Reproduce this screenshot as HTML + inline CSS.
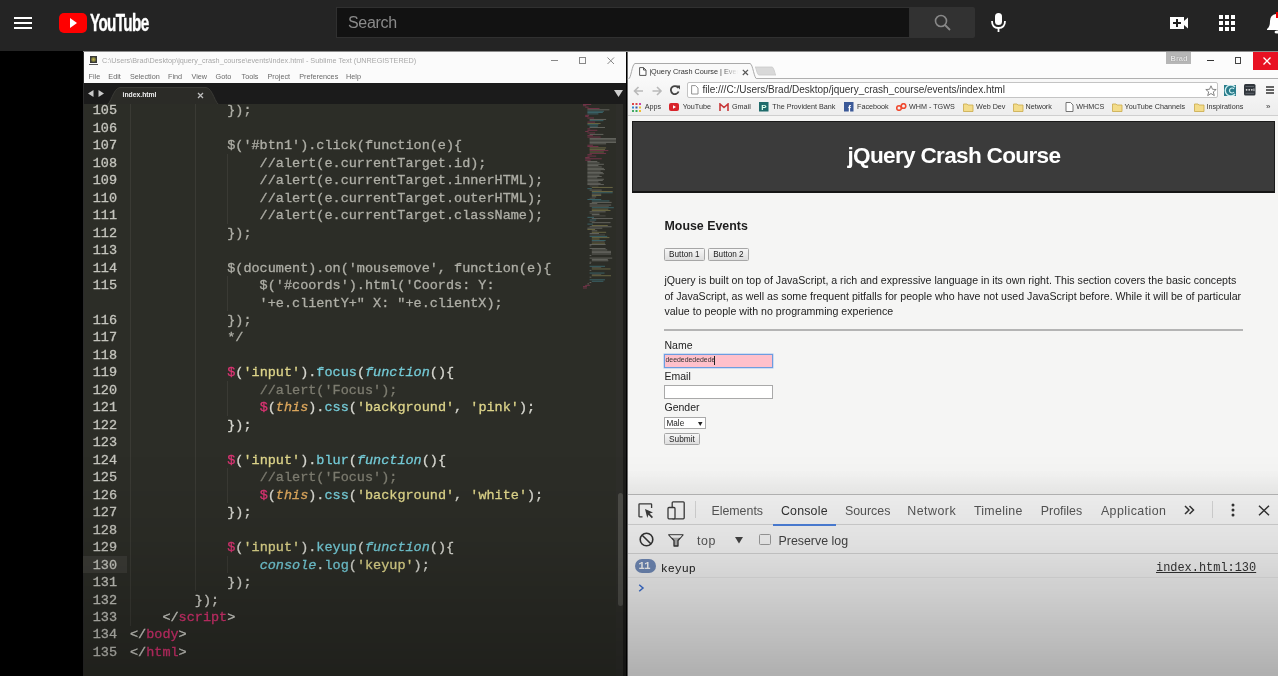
<!DOCTYPE html>
<html><head><meta charset="utf-8">
<style>
*{margin:0;padding:0;box-sizing:border-box}
html,body{width:1278px;height:676px;overflow:hidden;background:#000;font-family:"Liberation Sans",sans-serif}
#yt,#subl,#chrome{will-change:transform}
.a{position:absolute}
#yt{left:0;top:0;width:1278px;height:51px;background:#242424}
#subl{left:83px;top:52px;width:543px;height:624px;background:#2c2d27;overflow:hidden}
#chrome{left:627px;top:52px;width:651px;height:624px;background:#f2f2f2;overflow:hidden}
.code{font-family:"Liberation Mono",monospace;font-size:13.5px;line-height:17.47px;white-space:pre;color:#d6d6cf;-webkit-text-stroke:0.3px currentColor}
.ln{font-family:"Liberation Mono",monospace;font-size:13.5px;line-height:17.47px;white-space:pre;color:#c4c4bd;text-align:right;-webkit-text-stroke:0.3px currentColor}
.cm{color:#aeaea6}
.lc{color:#7d7c70}
.k{color:#dd3474}
.s{color:#ddd48a}
.f{color:#74cad6}
.i{font-style:italic}
.bk{top:50px;font-size:7.2px;color:#333;white-space:nowrap}
.btn{height:12.5px;background:linear-gradient(#f6f6f6,#dedede);border:1px solid #a6a6a6;border-radius:1.5px;font-size:8.2px;line-height:11.5px;text-align:center;color:#222}
.lbl{font-size:10.5px;color:#222}
.dt{font-size:12.4px;white-space:nowrap}
.mn{top:19.6px;font-size:7.25px;color:#6a6a6a;white-space:nowrap}
.o{color:#dba65c}
</style></head><body>
<!-- YouTube masthead -->
<div id="yt" class="a">
  <div class="a" style="left:14px;top:17px;width:18px;height:2px;background:#fff"></div>
  <div class="a" style="left:14px;top:22px;width:18px;height:2px;background:#fff"></div>
  <div class="a" style="left:14px;top:27px;width:18px;height:2px;background:#fff"></div>
  <div class="a" style="left:59px;top:13px;width:28px;height:20px;background:#f00;border-radius:5px"></div>
  <svg class="a" style="left:70px;top:18px" width="8" height="10"><path d="M0 0 L7 5 L0 10Z" fill="#fff"/></svg>
  <div class="a" style="left:90px;top:9px;font-weight:bold;font-size:24px;color:#fff;letter-spacing:-1px;transform:scaleX(0.635);-webkit-text-stroke:0.4px #fff;transform-origin:0 0;white-space:nowrap">YouTube</div>
  <div class="a" style="left:336px;top:7px;width:574px;height:31px;background:#121212;border:1px solid #303030"></div>
  <div class="a" style="left:348px;top:14px;font-size:16px;color:#8a8a8a;letter-spacing:-0.3px">Search</div>
  <div class="a" style="left:910px;top:7px;width:65px;height:31px;background:#323232;border-radius:0 2px 2px 0"></div>
  <svg class="a" style="left:930px;top:12px" width="24" height="22"><circle cx="11" cy="9" r="5.5" stroke="#888" stroke-width="1.6" fill="none"/><line x1="15" y1="13" x2="20" y2="18" stroke="#888" stroke-width="1.8"/></svg>
  <svg class="a" style="left:990px;top:12px" width="18" height="22"><rect x="5" y="1" width="7" height="12" rx="3.5" fill="#fff"/><path d="M2 9 Q2 16 8.5 16 Q15 16 15 9" stroke="#fff" stroke-width="1.8" fill="none"/><line x1="8.5" y1="16" x2="8.5" y2="20" stroke="#fff" stroke-width="1.8"/></svg>
  <svg class="a" style="left:1169px;top:16px" width="20" height="14"><rect x="1" y="1" width="14" height="12" fill="#fff"/><path d="M15 5 L19 1.5 L19 12.5 L15 9Z" fill="#fff"/><rect x="4" y="6" width="8" height="2" fill="#212121"/><rect x="7" y="3" width="2" height="8" fill="#212121"/></svg>
  <svg class="a" style="left:1219px;top:15px" width="17" height="17"><g fill="#fff"><rect x="0" y="0" width="4" height="4"/><rect x="6" y="0" width="4" height="4"/><rect x="12" y="0" width="4" height="4"/><rect x="0" y="6" width="4" height="4"/><rect x="6" y="6" width="4" height="4"/><rect x="12" y="6" width="4" height="4"/><rect x="0" y="12" width="4" height="4"/><rect x="6" y="12" width="4" height="4"/><rect x="12" y="12" width="4" height="4"/></g></svg>
  <svg class="a" style="left:1266px;top:12px" width="12" height="22"><path d="M1 17 Q4 15 4 9 Q4 3 10 2 L12 2 L12 18 L1 18Z" fill="#fff"/><ellipse cx="11" cy="20" rx="2.5" ry="1.5" fill="#fff"/><rect x="10" y="0" width="2" height="6" fill="#e00"/></svg>
</div>

<!-- Sublime window -->
<div id="subl" class="a">
  <div class="a" style="left:0;top:0;width:1px;height:625px;background:#2a2a2a"></div>
  <div class="a" style="left:0;top:49.5px;width:44px;height:17.47px;background:transparent"></div>
  <div class="a" style="left:0;top:503.5px;width:44px;height:17.5px;background:#3b3b36"></div>
  <div class="a ln" style="left:0;top:50.4px;width:34px">105
106
107
108
109
110
111
112
113
114
115

116
117
118
119
120
121
122
123
124
125
126
127
128
129
130
131
132
133
134
135</div>
  <div class="a" style="left:47.3px;top:49.60px;width:1px;height:524.10px;background:#3a3a34"></div>
  <div class="a" style="left:111.8px;top:49.60px;width:1px;height:489.16px;background:#3a3a34"></div>
  <div class="a" style="left:144.3px;top:102.01px;width:1px;height:69.88px;background:#3a3a34"></div>
  <div class="a" style="left:144.3px;top:224.30px;width:1px;height:34.94px;background:#3a3a34"></div>
  <div class="a" style="left:144.3px;top:329.12px;width:1px;height:34.94px;background:#3a3a34"></div>
  <div class="a" style="left:144.3px;top:416.47px;width:1px;height:34.94px;background:#3a3a34"></div>
  <div class="a" style="left:144.3px;top:503.82px;width:1px;height:17.47px;background:#3a3a34"></div>
  <div class="a code" style="left:47px;top:50.4px"><span class=cm>            });</span>

<span class=cm>            $('#btn1').click(function(e){</span>
<span class=cm>                //alert(e.currentTarget.id);</span>
<span class=cm>                //alert(e.currentTarget.innerHTML);</span>
<span class=cm>                //alert(e.currentTarget.outerHTML);</span>
<span class=cm>                //alert(e.currentTarget.className);</span>
<span class=cm>            });</span>

<span class=cm>            $(document).on('mousemove', function(e){</span>
<span class=cm>                $('#coords').html('Coords: Y:</span>
<span class=cm>                '+e.clientY+" X: "+e.clientX);</span>
<span class=cm>            });</span>
<span class=cm>            */</span>

            <span class=k>$</span>(<span class=s>'input'</span>).<span class=f>focus</span>(<span class='f i'>function</span>(){
                <span class=lc>//alert('Focus');</span>
                <span class=k>$</span>(<span class='o i'>this</span>).<span class=f>css</span>(<span class=s>'background'</span>, <span class=s>'pink'</span>);
            });

            <span class=k>$</span>(<span class=s>'input'</span>).<span class=f>blur</span>(<span class='f i'>function</span>(){
                <span class=lc>//alert('Focus');</span>
                <span class=k>$</span>(<span class='o i'>this</span>).<span class=f>css</span>(<span class=s>'background'</span>, <span class=s>'white'</span>);
            });

            <span class=k>$</span>(<span class=s>'input'</span>).<span class=f>keyup</span>(<span class='f i'>function</span>(){
                <span class='f i'>console</span>.<span class=f>log</span>(<span class=s>'keyup'</span>);
            });
        });
    &lt;/<span class=k>script</span>&gt;
&lt;/<span class=k>body</span>&gt;
&lt;/<span class=k>html</span>&gt;</div>
  <!-- title bar -->
  <div class="a" style="left:1px;top:0;width:542px;height:31px;background:#fbfbfb">
    <div class="a" style="left:5.6px;top:3.5px;width:7.5px;height:7.5px;background:radial-gradient(circle,#c8b050 0,#8a8a40 45%,#333 90%);border:1px solid #3a3a3a"></div>
    <div class="a" style="left:5.2px;top:12px;width:8.8px;height:1.2px;background:#555"></div>
    <div class="a" style="left:18px;top:3.5px;font-size:7.25px;color:#a8a8a8;white-space:nowrap">C:\Users\Brad\Desktop\jquery_crash_course\events\index.html - Sublime Text (UNREGISTERED)</div>
    <div class="a mn" style="left:4.5px">File</div><div class="a mn" style="left:24.3px">Edit</div><div class="a mn" style="left:45.9px">Selection</div><div class="a mn" style="left:84.0px">Find</div><div class="a mn" style="left:107.5px">View</div><div class="a mn" style="left:131.5px">Goto</div><div class="a mn" style="left:157.5px">Tools</div><div class="a mn" style="left:183.5px">Project</div><div class="a mn" style="left:215.2px">Preferences</div><div class="a mn" style="left:262.1px">Help</div>
    <div class="a" style="left:467px;top:8px;width:7px;height:1px;background:#888"></div>
    <div class="a" style="left:495px;top:5px;width:7px;height:7px;border:1px solid #888"></div>
    <svg class="a" style="left:523px;top:5px" width="8" height="8"><path d="M0.5 0.5 L7 7 M7 0.5 L0.5 7" stroke="#888" stroke-width="1"/></svg>
  </div>
  <!-- tab bar -->
  <div class="a" style="left:1px;top:31px;width:542px;height:21px;background:#1b1b1b;overflow:hidden">
    <svg class="a" style="left:4px;top:7px" width="20" height="8"><path d="M0 3.5 L5.5 0 L5.5 7Z M10.5 0 L16 3.5 L10.5 7Z" fill="#c9c9c9"/></svg>
    <svg class="a" style="left:18.5px;top:1px" width="130" height="21"><path d="M3 21 C8 21 10 4 17 3.5 L103 3.5 C110 4 112 21 117 21Z" fill="#2b2b27" stroke="#3a3a36" stroke-width="1"/></svg>
    <div class="a" style="left:38.5px;top:8.3px;font-size:6.8px;font-weight:bold;color:#f0f0f0">index.html</div>
    <svg class="a" style="left:113px;top:9px" width="7" height="7"><path d="M1 1 L6 6 M6 1 L1 6" stroke="#bdbdbd" stroke-width="1.3"/></svg>
    <svg class="a" style="left:530px;top:7px" width="9" height="8"><path d="M0 0 L9 0 L4.5 7Z" fill="#d0d0d0"/></svg>
  </div>
  <!-- minimap -->
  <svg opacity="0.6" class="a" style="left:500px;top:52px" width="34" height="186"><rect x="0.0" y="0.00" width="8.2" height="0.8" fill="#b83a6a"/><rect x="0.0" y="1.36" width="3.3" height="0.8" fill="#b83a6a"/><rect x="2.2" y="2.72" width="3.3" height="0.8" fill="#b83a6a"/><rect x="4.4" y="4.08" width="12.1" height="0.8" fill="#b83a6a"/><rect x="4.4" y="5.44" width="22.0" height="0.8" fill="#9a9a94"/><rect x="4.4" y="6.80" width="16.5" height="0.8" fill="#4a9aaa"/><rect x="4.4" y="8.16" width="15.4" height="0.8" fill="#4a9aaa"/><rect x="4.4" y="9.52" width="11.0" height="0.8" fill="#4a9aaa"/><rect x="2.2" y="10.88" width="3.9" height="0.8" fill="#b83a6a"/><rect x="2.2" y="12.24" width="3.3" height="0.8" fill="#b83a6a"/><rect x="4.4" y="13.60" width="6.6" height="0.8" fill="#b83a6a"/><rect x="6.6" y="14.96" width="16.5" height="0.8" fill="#9a9a94"/><rect x="6.6" y="16.32" width="13.8" height="0.8" fill="#4a9aaa"/><rect x="4.4" y="17.68" width="7.7" height="0.8" fill="#b83a6a"/><rect x="4.4" y="19.04" width="13.2" height="0.8" fill="#a8a060"/><rect x="4.4" y="20.40" width="11.0" height="0.8" fill="#4a9aaa"/><rect x="6.6" y="21.76" width="8.2" height="0.8" fill="#4a9aaa"/><rect x="6.6" y="23.12" width="15.4" height="0.8" fill="#9a9a94"/><rect x="4.4" y="24.48" width="2.8" height="0.8" fill="#b83a6a"/><rect x="4.4" y="25.84" width="9.9" height="0.8" fill="#b83a6a"/><rect x="2.2" y="27.20" width="3.3" height="0.8" fill="#b83a6a"/><rect x="4.4" y="28.56" width="7.7" height="0.8" fill="#b83a6a"/><rect x="6.6" y="29.92" width="13.8" height="0.8" fill="#9a9a94"/><rect x="4.4" y="31.28" width="5.5" height="0.8" fill="#b83a6a"/><rect x="4.4" y="32.64" width="13.2" height="0.8" fill="#b83a6a"/><rect x="6.6" y="34.00" width="27.5" height="0.8" fill="#9a9a94"/><rect x="6.6" y="35.36" width="28.6" height="0.8" fill="#9a9a94"/><rect x="6.6" y="36.72" width="26.4" height="0.8" fill="#9a9a94"/><rect x="6.6" y="38.08" width="27.5" height="0.8" fill="#9a9a94"/><rect x="6.6" y="39.44" width="16.5" height="0.8" fill="#9a9a94"/><rect x="4.4" y="40.80" width="5.5" height="0.8" fill="#b83a6a"/><rect x="4.4" y="42.16" width="11.0" height="0.8" fill="#b83a6a"/><rect x="6.6" y="43.52" width="16.5" height="0.8" fill="#a8a060"/><rect x="6.6" y="44.88" width="15.4" height="0.8" fill="#a8a060"/><rect x="6.6" y="46.24" width="18.7" height="0.8" fill="#b83a6a"/><rect x="6.6" y="47.60" width="14.3" height="0.8" fill="#a8a060"/><rect x="6.6" y="48.96" width="16.5" height="0.8" fill="#b83a6a"/><rect x="4.4" y="50.32" width="4.4" height="0.8" fill="#b83a6a"/><rect x="4.4" y="51.68" width="8.8" height="0.8" fill="#b83a6a"/><rect x="2.2" y="53.04" width="4.4" height="0.8" fill="#b83a6a"/><rect x="2.2" y="54.40" width="16.5" height="0.8" fill="#b83a6a"/><rect x="2.2" y="55.76" width="5.5" height="0.8" fill="#b83a6a"/><rect x="4.4" y="57.12" width="9.9" height="0.8" fill="#9a9a94"/><rect x="4.4" y="58.48" width="12.1" height="0.8" fill="#9a9a94"/><rect x="4.4" y="59.84" width="16.5" height="0.8" fill="#9a9a94"/><rect x="4.4" y="61.20" width="11.0" height="0.8" fill="#9a9a94"/><rect x="4.4" y="62.56" width="14.3" height="0.8" fill="#9a9a94"/><rect x="4.4" y="63.92" width="16.5" height="0.8" fill="#9a9a94"/><rect x="4.4" y="65.28" width="17.6" height="0.8" fill="#9a9a94"/><rect x="4.4" y="66.64" width="13.2" height="0.8" fill="#9a9a94"/><rect x="4.4" y="68.00" width="15.4" height="0.8" fill="#9a9a94"/><rect x="4.4" y="69.36" width="16.5" height="0.8" fill="#9a9a94"/><rect x="4.4" y="70.72" width="12.1" height="0.8" fill="#9a9a94"/><rect x="4.4" y="72.08" width="14.3" height="0.8" fill="#9a9a94"/><rect x="4.4" y="73.44" width="9.9" height="0.8" fill="#9a9a94"/><rect x="4.4" y="74.80" width="16.5" height="0.8" fill="#9a9a94"/><rect x="4.4" y="76.16" width="15.4" height="0.8" fill="#9a9a94"/><rect x="4.4" y="77.52" width="11.0" height="0.8" fill="#9a9a94"/><rect x="4.4" y="78.88" width="13.2" height="0.8" fill="#9a9a94"/><rect x="4.4" y="80.24" width="16.5" height="0.8" fill="#9a9a94"/><rect x="6.6" y="81.60" width="8.8" height="0.8" fill="#6e6e66"/><rect x="8.8" y="82.96" width="20.9" height="0.8" fill="#a8a060"/><rect x="4.4" y="84.32" width="4.4" height="0.8" fill="#4a9aaa"/><rect x="6.6" y="85.68" width="12.1" height="0.8" fill="#9a9a94"/><rect x="8.8" y="87.04" width="20.9" height="0.8" fill="#a8a060"/><rect x="8.8" y="88.40" width="20.9" height="0.8" fill="#4a9aaa"/><rect x="8.8" y="89.76" width="9.4" height="0.8" fill="#9a9a94"/><rect x="8.8" y="91.12" width="9.4" height="0.8" fill="#a8a060"/><rect x="8.8" y="92.48" width="4.4" height="0.8" fill="#9a9a94"/><rect x="6.6" y="93.84" width="5.5" height="0.8" fill="#6e6e66"/><rect x="4.4" y="95.20" width="13.8" height="0.8" fill="#4a9aaa"/><rect x="8.8" y="96.56" width="17.6" height="0.8" fill="#4a9aaa"/><rect x="8.8" y="97.92" width="19.8" height="0.8" fill="#9a9a94"/><rect x="6.6" y="99.28" width="7.7" height="0.8" fill="#9a9a94"/><rect x="6.6" y="100.64" width="21.5" height="0.8" fill="#9a9a94"/><rect x="6.6" y="102.00" width="19.2" height="0.8" fill="#6e6e66"/><rect x="8.8" y="103.36" width="22.0" height="0.8" fill="#4a9aaa"/><rect x="8.8" y="104.72" width="16.5" height="0.8" fill="#a8a060"/><rect x="8.8" y="106.08" width="18.7" height="0.8" fill="#a8a060"/><rect x="6.6" y="107.44" width="16.0" height="0.8" fill="#9a9a94"/><rect x="6.6" y="108.80" width="9.9" height="0.8" fill="#6e6e66"/><rect x="8.8" y="110.16" width="7.7" height="0.8" fill="#9a9a94"/><rect x="8.8" y="111.52" width="13.8" height="0.8" fill="#6e6e66"/><rect x="4.4" y="112.88" width="6.6" height="0.8" fill="#4a9aaa"/><rect x="8.8" y="114.24" width="20.9" height="0.8" fill="#9a9a94"/><rect x="6.6" y="115.60" width="6.6" height="0.8" fill="#4a9aaa"/><rect x="6.6" y="116.96" width="5.0" height="0.8" fill="#6e6e66"/><rect x="8.8" y="118.32" width="18.7" height="0.8" fill="#9a9a94"/><rect x="4.4" y="119.68" width="5.5" height="0.8" fill="#4a9aaa"/><rect x="8.8" y="121.04" width="16.0" height="0.8" fill="#a8a060"/><rect x="6.6" y="122.40" width="22.0" height="0.8" fill="#9a9a94"/><rect x="4.4" y="123.76" width="14.9" height="0.8" fill="#9a9a94"/><rect x="4.4" y="125.12" width="7.7" height="0.8" fill="#a8a060"/><rect x="8.8" y="126.48" width="5.5" height="0.8" fill="#9a9a94"/><rect x="8.8" y="127.84" width="14.3" height="0.8" fill="#a8a060"/><rect x="6.6" y="129.20" width="9.4" height="0.8" fill="#9a9a94"/><rect x="6.6" y="130.56" width="15.4" height="0.8" fill="#6e6e66"/><rect x="6.6" y="131.92" width="17.6" height="0.8" fill="#4a9aaa"/><rect x="8.8" y="133.28" width="17.6" height="0.8" fill="#a8a060"/><rect x="8.8" y="134.64" width="7.7" height="0.8" fill="#a8a060"/><rect x="8.8" y="136.00" width="13.8" height="0.8" fill="#4a9aaa"/><rect x="8.8" y="137.36" width="12.7" height="0.8" fill="#6e6e66"/><rect x="8.8" y="138.72" width="13.2" height="0.8" fill="#a8a060"/><rect x="6.6" y="140.08" width="16.0" height="0.8" fill="#9a9a94"/><rect x="6.6" y="141.44" width="1.7" height="0.8" fill="#9a9a94"/><rect x="6.6" y="144.16" width="16.0" height="0.8" fill="#9a9a94"/><rect x="8.8" y="145.52" width="15.4" height="0.8" fill="#9a9a94"/><rect x="8.8" y="146.88" width="19.2" height="0.8" fill="#9a9a94"/><rect x="8.8" y="148.24" width="19.2" height="0.8" fill="#9a9a94"/><rect x="8.8" y="149.60" width="19.2" height="0.8" fill="#9a9a94"/><rect x="6.6" y="150.96" width="1.7" height="0.8" fill="#9a9a94"/><rect x="6.6" y="153.68" width="22.6" height="0.8" fill="#9a9a94"/><rect x="8.8" y="155.04" width="16.0" height="0.8" fill="#9a9a94"/><rect x="8.8" y="156.40" width="16.5" height="0.8" fill="#9a9a94"/><rect x="6.6" y="157.76" width="1.7" height="0.8" fill="#9a9a94"/><rect x="6.6" y="159.12" width="1.1" height="0.8" fill="#9a9a94"/><rect x="6.6" y="161.84" width="15.4" height="0.8" fill="#4a9aaa"/><rect x="8.8" y="163.20" width="9.4" height="0.8" fill="#6e6e66"/><rect x="8.8" y="164.56" width="18.7" height="0.8" fill="#a8a060"/><rect x="6.6" y="165.92" width="1.7" height="0.8" fill="#9a9a94"/><rect x="6.6" y="168.64" width="14.9" height="0.8" fill="#4a9aaa"/><rect x="8.8" y="170.00" width="9.4" height="0.8" fill="#6e6e66"/><rect x="8.8" y="171.36" width="19.2" height="0.8" fill="#a8a060"/><rect x="6.6" y="172.72" width="1.7" height="0.8" fill="#9a9a94"/><rect x="6.6" y="175.44" width="15.4" height="0.8" fill="#4a9aaa"/><rect x="8.8" y="176.80" width="11.6" height="0.8" fill="#4a9aaa"/><rect x="6.6" y="178.16" width="1.7" height="0.8" fill="#9a9a94"/><rect x="4.4" y="179.52" width="1.7" height="0.8" fill="#9a9a94"/><rect x="2.2" y="180.88" width="5.0" height="0.8" fill="#b83a6a"/><rect x="0.0" y="182.24" width="3.9" height="0.8" fill="#b83a6a"/><rect x="0.0" y="183.60" width="3.9" height="0.8" fill="#b83a6a"/></svg>
  <div class="a" style="left:532.5px;top:52px;width:8px;height:573px;background:#2e2e2a"></div>
  <div class="a" style="left:540px;top:52px;width:3px;height:573px;background:#1d1d1b"></div>
  <div class="a" style="left:534.8px;top:441.2px;width:5.3px;height:113px;border-radius:2.5px;background:#4c4c47"></div>
</div>

<!-- Chrome window -->
<div id="chrome" class="a">
  <div class="a" style="left:0;top:0;width:1px;height:624px;background:#6a6a6a"></div>
  <!-- frame / tab strip -->
  <div class="a" style="left:1px;top:0;width:650px;height:27px;background:#fcfcfc"></div>
  <svg class="a" style="left:0;top:10px" width="160" height="18"><path d="M0.5 17 L1.5 17 C4 17 5 2 8 1.5 L123 1.5 C126 2 127 17 130 17 L651 17" fill="#f9f9f9" stroke="#a9a9a9" stroke-width="1"/><path d="M128 5 L145 5 C147 5 148 13 149 13 L132 13 C130 13 129 5 128 5Z" fill="#d9d9d9" stroke="#c9c9c9" stroke-width="0.8"/></svg>
  <svg class="a" style="left:12.0px;top:15.3px" width="8" height="9"><path d="M0.6 0.6 L4.5 0.6 L7 3 L7 8.4 L0.6 8.4Z M4.5 0.6 L4.5 3 L7 3" fill="#fff" stroke="#555" stroke-width="1"/></svg>
  <div class="a" style="left:22.5px;top:15.0px;font-size:7.3px;color:#333;white-space:nowrap;width:88px;overflow:hidden;-webkit-mask-image:linear-gradient(to right,#000 80%,transparent)">jQuery Crash Course | Events</div>
  <svg class="a" style="left:114.5px;top:16.5px" width="7" height="7"><path d="M0.8 0.8 L6 6 M6 0.8 L0.8 6" stroke="#555" stroke-width="1.2"/></svg>
  <!-- Brad badge & controls -->
  <div class="a" style="left:539.0px;top:0;width:25px;height:12px;background:#b6b6b6"></div>
  <div class="a" style="left:543.5px;top:1.5px;font-size:7.5px;font-weight:bold;color:#e4e4e4;text-shadow:0 0 1px #777">Brad</div>
  <div class="a" style="left:580.0px;top:8.0px;width:6.5px;height:1.3px;background:#333"></div>
  <div class="a" style="left:607.5px;top:5.2px;width:6.5px;height:6.5px;border:1px solid #444"></div>
  <div class="a" style="left:626.0px;top:0;width:25px;height:17.5px;background:#e81123"></div>
  <svg class="a" style="left:635.5px;top:4.5px" width="8" height="8"><path d="M0.5 0.5 L7.5 7.5 M7.5 0.5 L0.5 7.5" stroke="#fff" stroke-width="1.3"/></svg>
  <!-- toolbar -->
  <div class="a" style="left:1px;top:27px;width:650px;height:37px;background:linear-gradient(#f9f9f9,#ededed)"></div>
  <div class="a" style="left:130px;top:26px;width:521px;height:1px;background:#b0b0b0"></div>
  <svg class="a" style="left:6.0px;top:33.5px" width="11" height="10"><path d="M10 5 L1.5 5 M5.5 1 L1.5 5 L5.5 9" stroke="#b9b9b9" stroke-width="1.6" fill="none"/></svg>
  <svg class="a" style="left:24.5px;top:33.5px" width="11" height="10"><path d="M0.5 5 L9 5 M5 1 L9 5 L5 9" stroke="#b9b9b9" stroke-width="1.6" fill="none"/></svg>
  <svg class="a" style="left:42.5px;top:33.0px" width="11" height="10"><path d="M8.3 3 A4 4 0 1 0 8.6 6.5" stroke="#444" stroke-width="1.8" fill="none"/><path d="M6 0.5 L10 0.5 L10 4.5Z" fill="#444"/></svg>
  <div class="a" style="left:59.6px;top:30.0px;width:531.4px;height:16px;background:#fff;border:1px solid #c4c4c4;border-radius:2px"></div>
  <svg class="a" style="left:64.0px;top:33.3px" width="8" height="10"><path d="M0.6 0.6 L4.5 0.6 L7 3 L7 9 L0.6 9Z" fill="#fff" stroke="#888" stroke-width="0.9"/></svg>
  <div class="a" style="left:75.5px;top:31.5px;font-size:10px;color:#333;white-space:nowrap">file:///C:/Users/Brad/Desktop/jquery_crash_course/events/index.html</div>
  <svg class="a" style="left:577.5px;top:32.5px" width="12" height="12"><path d="M6 0.8 L7.5 4.3 L11.2 4.5 L8.3 6.9 L9.3 10.6 L6 8.5 L2.7 10.6 L3.7 6.9 L0.8 4.5 L4.5 4.3Z" fill="none" stroke="#777" stroke-width="0.9"/></svg>
  <svg class="a" style="left:596.8px;top:32.8px" width="12" height="11"><rect x="0" y="0" width="12" height="11" fill="#2a7d8c"/><path d="M11 2 A5.5 5.5 0 1 0 11 9" stroke="#cfeef0" stroke-width="1.4" fill="none"/><path d="M10 4 A2.5 2.5 0 1 0 10 7" stroke="#cfeef0" stroke-width="1.2" fill="none"/></svg>
  <svg class="a" style="left:617.0px;top:32.0px" width="12" height="12"><rect x="0" y="0" width="11.5" height="11.5" rx="1.5" fill="#30363c"/><rect x="1.5" y="2" width="8.5" height="1" fill="#5a6068"/><circle cx="2.6" cy="5.8" r="0.9" fill="#ddd"/><circle cx="5.2" cy="5.8" r="0.9" fill="#ddd"/><circle cx="7.8" cy="5.8" r="0.9" fill="#ddd"/><rect x="9.5" y="4.5" width="0.9" height="2.6" fill="#ddd"/><rect x="1.5" y="8.8" width="8.5" height="1" fill="#5a6068"/></svg>
  <svg class="a" style="left:639.0px;top:34.0px" width="9" height="8"><path d="M0 1 L8 1 M0 4 L8 4 M0 7 L8 7" stroke="#333" stroke-width="1.5"/></svg>
  <!-- bookmarks -->
  <div class="a" style="left:1px;top:63.3px;width:650px;height:1px;background:#cfcfcf"></div>
  <svg class="a" style="left:5.3px;top:50.5px" width="9" height="9"><g><rect x="0" y="0" width="2" height="2" fill="#d44"/><rect x="3.5" y="0" width="2" height="2" fill="#d44"/><rect x="7" y="0" width="2" height="2" fill="#c4a"/><rect x="0" y="3.5" width="2" height="2" fill="#38c"/><rect x="3.5" y="3.5" width="2" height="2" fill="#35a"/><rect x="7" y="3.5" width="2" height="2" fill="#eb3"/><rect x="0" y="7" width="2" height="2" fill="#4a6"/><rect x="3.5" y="7" width="2" height="2" fill="#3a5"/><rect x="7" y="7" width="2" height="2" fill="#eb3"/></g></svg>
<div class="a bk" style="left:17.8px">Apps</div>
<svg class="a" style="left:42.0px;top:51px" width="10" height="8"><rect x="0" y="0" width="10" height="8" rx="2" fill="#d8232a"/><path d="M4 2.2 L7 4 L4 5.8Z" fill="#fff"/></svg>
<div class="a bk" style="left:55.7px">YouTube</div>
<svg class="a" style="left:92.0px;top:51px" width="10" height="8"><path d="M1 8 L1 1 L5 4.5 L9 1 L9 8" stroke="#c8383a" stroke-width="1.6" fill="none"/></svg>
<div class="a bk" style="left:105.0px">Gmail</div>
<svg class="a" style="left:132.0px;top:50px" width="10" height="10"><rect x="0" y="0" width="9.5" height="9.5" fill="#1f6b6b"/><text x="2.3" y="8" font-size="8" font-family="Liberation Sans" font-weight="bold" fill="#dfe">P</text></svg>
<div class="a bk" style="left:145.3px">The Provident Bank</div>
<svg class="a" style="left:217.0px;top:50px" width="10" height="10"><rect x="0" y="0" width="9.5" height="9.5" fill="#3b5998"/><text x="4" y="9.5" font-size="9" font-family="Liberation Sans" font-weight="bold" fill="#fff">f</text></svg>
<div class="a bk" style="left:230.0px">Facebook</div>
<svg class="a" style="left:268.6px;top:51px" width="12" height="8"><circle cx="3" cy="5" r="2.3" stroke="#f04a30" stroke-width="1.6" fill="none"/><circle cx="7.5" cy="3" r="2.3" stroke="#f04a30" stroke-width="1.6" fill="none"/></svg>
<div class="a bk" style="left:282.0px">WHM - TGWS</div>
<svg class="a" style="left:336.0px;top:50.5px" width="11" height="9"><path d="M0.5 1 L4 1 L5 2 L10 2 L10 8.5 L0.5 8.5Z" fill="#f3dc8a" stroke="#c9a94a" stroke-width="0.8"/></svg>
<div class="a bk" style="left:349.0px">Web Dev</div>
<svg class="a" style="left:386.0px;top:50.5px" width="11" height="9"><path d="M0.5 1 L4 1 L5 2 L10 2 L10 8.5 L0.5 8.5Z" fill="#f3dc8a" stroke="#c9a94a" stroke-width="0.8"/></svg>
<div class="a bk" style="left:398.5px">Network</div>
<svg class="a" style="left:437.5px;top:50px" width="9" height="10"><path d="M1 0.5 L5.5 0.5 L8 3 L8 9.5 L1 9.5Z" fill="#fff" stroke="#666" stroke-width="0.9"/></svg>
<div class="a bk" style="left:449.3px">WHMCS</div>
<svg class="a" style="left:484.8px;top:50.5px" width="11" height="9"><path d="M0.5 1 L4 1 L5 2 L10 2 L10 8.5 L0.5 8.5Z" fill="#f3dc8a" stroke="#c9a94a" stroke-width="0.8"/></svg>
<div class="a bk" style="left:497.6px">YouTube Channels</div>
<svg class="a" style="left:566.6px;top:50.5px" width="11" height="9"><path d="M0.5 1 L4 1 L5 2 L10 2 L10 8.5 L0.5 8.5Z" fill="#f3dc8a" stroke="#c9a94a" stroke-width="0.8"/></svg>
<div class="a bk" style="left:579.5px">Inspirations</div>

  <div class="a bk" style="left:639.0px;font-size:8px">&raquo;</div>
  <!-- page -->
  <div class="a" style="left:1px;top:64.3px;width:650px;height:378.3px;background:#f5f5f4"></div>
  <div class="a" style="left:5.3px;top:69.4px;width:643.2px;height:71.6px;background:#3b3b3b;border:1px solid #1a1a1a;border-bottom:2px solid #151515"></div>
  <div class="a" style="left:5.3px;top:90.5px;width:643.2px;text-align:center;font-size:22.6px;letter-spacing:-0.7px;font-weight:bold;color:#fff">jQuery Crash Course</div>
  <div class="a" style="left:37.5px;top:166.7px;font-size:12.4px;font-weight:bold;color:#1e1e1e">Mouse Events</div>
  <div class="a btn" style="left:37.0px;top:196.0px;width:40.7px">Button 1</div>
  <div class="a btn" style="left:81.0px;top:196.0px;width:40.8px">Button 2</div>
  <div class="a" style="left:37.4px;top:221.0px;width:590px;font-size:10.62px;line-height:15.5px;color:#222">jQuery is built on top of JavaScript, a rich and expressive language in its own right. This section covers the basic concepts<br>of JavaScript, as well as some frequent pitfalls for people who have not used JavaScript before. While it will be of particular<br>value to people with no programming experience</div>
  <div class="a" style="left:37.0px;top:277.0px;width:579.4px;height:1.5px;background:#b4b4b4"></div>
  <div class="a lbl" style="left:37.5px;top:286.5px">Name</div>
  <div class="a" style="left:37.2px;top:302.0px;width:108.4px;height:13.7px;background:#ffc0cb;border:1px solid #6d9de0;box-shadow:0 0 0 0.5px #a9c6ee"></div>
  <div class="a" style="left:38.5px;top:303.5px;font-size:6.9px;color:#333">deededededede</div>
  <div class="a" style="left:87.3px;top:304.0px;width:0.8px;height:9px;background:#222"></div>
  <div class="a lbl" style="left:37.5px;top:317.5px">Email</div>
  <div class="a" style="left:37.2px;top:333.4px;width:108.4px;height:13.3px;background:#fff;border:1px solid #a9a9a9"></div>
  <div class="a lbl" style="left:37.5px;top:348.5px">Gender</div>
  <div class="a" style="left:37.2px;top:365.0px;width:42.3px;height:12px;background:#fff;border:1px solid #a9a9a9"></div>
  <div class="a" style="left:39.5px;top:367.3px;font-size:8.2px;color:#222">Male</div>
  <svg class="a" style="left:70.5px;top:369.5px" width="5" height="5"><path d="M0 0 L4.5 0 L2.25 4Z" fill="#222"/></svg>
  <div class="a btn" style="left:37.0px;top:380.7px;width:35.8px;height:12.8px;font-size:8.3px;line-height:10.8px">Submit</div>
  <!-- devtools -->
  <div class="a" style="left:1px;top:418px;width:650px;height:24.3px;background:linear-gradient(rgba(0,0,0,0),rgba(0,0,0,.045))"></div>
  <div class="a" style="left:1px;top:442.2px;width:650px;height:181.8px;background:#f1f1f1;border-top:1px solid #b4b4b4"></div>
  <div class="a" style="left:1px;top:471.50px;width:650px;height:1px;background:#d0d0d0"></div>
  <div class="a" style="left:1px;top:501.00px;width:650px;height:1px;background:#d0d0d0"></div>
  <div class="a" style="left:1px;top:524.70px;width:650px;height:1px;background:#e4e4e4"></div>
  <svg class="a" style="left:11.00px;top:450.50px" width="16" height="16"><path d="M4.5 13.8 L1.6 13.8 Q1 13.8 1 13.2 L1 1.4 Q1 0.8 1.6 0.8 L13 0.8 Q13.6 0.8 13.6 1.4 L13.6 5" stroke="#3a3a3a" stroke-width="1.3" fill="none"/><path d="M7 6 L15 9.5 L11.6 10.6 L15 14 L13.8 15.2 L10.4 11.8 L9.3 15Z" fill="#3a3a3a"/></svg>
  <svg class="a" style="left:39.50px;top:448.50px" width="18" height="19"><rect x="5.2" y="0.8" width="12" height="17" rx="1" stroke="#3a3a3a" stroke-width="1.3" fill="none"/><rect x="1" y="6.5" width="7" height="11.3" rx="1" stroke="#3a3a3a" stroke-width="1.3" fill="#f3f3f3"/></svg>
  <div class="a" style="left:68.30px;top:449.20px;width:1px;height:17px;background:#d2d2d2"></div>
  <div class="a dt" style="left:84.40px;top:452.10px;color:#555">Elements</div>
<div class="a dt" style="left:153.90px;top:452.10px;color:#333;letter-spacing:0.2px">Console</div>
<div class="a dt" style="left:217.90px;top:452.10px;color:#555;letter-spacing:0.0px">Sources</div>
<div class="a dt" style="left:280.20px;top:452.10px;color:#555;letter-spacing:0.5px">Network</div>
<div class="a dt" style="left:346.90px;top:452.10px;color:#555;letter-spacing:0.3px">Timeline</div>
<div class="a dt" style="left:413.80px;top:452.10px;color:#555">Profiles</div>
<div class="a dt" style="left:473.90px;top:452.10px;color:#555;letter-spacing:0.45px">Application</div>

  <div class="a" style="left:146.00px;top:471.50px;width:63px;height:2px;background:#4b7fd8"></div>
  <svg class="a" style="left:556.50px;top:453.00px" width="11" height="10"><path d="M1 1 L5 5 L1 9 M5.5 1 L9.5 5 L5.5 9" stroke="#333" stroke-width="1.5" fill="none"/></svg>
  <div class="a" style="left:585.30px;top:449.20px;width:1px;height:17px;background:#d2d2d2"></div>
  <svg class="a" style="left:604.30px;top:451.00px" width="4" height="14"><circle cx="2" cy="2" r="1.5" fill="#333"/><circle cx="2" cy="7" r="1.5" fill="#333"/><circle cx="2" cy="12" r="1.5" fill="#333"/></svg>
  <svg class="a" style="left:630.50px;top:453.00px" width="12" height="11"><path d="M1 0.8 L11 10.2 M11 0.8 L1 10.2" stroke="#333" stroke-width="1.5"/></svg>
  <svg class="a" style="left:11.50px;top:480.00px" width="15" height="15"><circle cx="7.5" cy="7.5" r="6.3" stroke="#333" stroke-width="1.6" fill="none"/><path d="M3.2 3.2 L11.8 11.8" stroke="#333" stroke-width="1.6"/></svg>
  <svg class="a" style="left:41.30px;top:481.50px" width="16" height="13"><path d="M0.8 0.8 L15 0.8 L10 6.5 L10 12 L6 12 L6 6.5Z" stroke="#333" stroke-width="1.3" fill="#aaa" stroke-linejoin="round"/><path d="M1.5 1.2 L14.3 1.2 L12 3.8 L4 3.8Z" fill="#f3f3f3"/></svg>
  <div class="a dt" style="left:70.00px;top:481.60px;color:#555;letter-spacing:0.6px">top</div>
  <svg class="a" style="left:108.00px;top:485.00px" width="8" height="7"><path d="M0 0 L8 0 L4 6.5Z" fill="#444"/></svg>
  <div class="a" style="left:132.00px;top:481.50px;width:11.5px;height:11.3px;border:1px solid #9a9a9a;border-radius:1.5px;background:#f0f0f0"></div>
  <div class="a dt" style="left:151.50px;top:481.60px;color:#444">Preserve log</div>
  <div class="a" style="left:7.50px;top:506.50px;width:21.2px;height:14.5px;border-radius:7px;background:#6f88b5"></div>
  <div class="a" style="left:11.50px;top:507.50px;font-family:'Liberation Mono',monospace;font-size:10.5px;font-weight:bold;color:#f2f2f2;letter-spacing:-0.5px">11</div>
  <div class="a" style="left:33.70px;top:509.70px;font-family:'Liberation Mono',monospace;font-size:11.7px;color:#222">keyup</div>
  <div class="a" style="left:529.00px;top:509.10px;font-family:'Liberation Mono',monospace;font-size:11.93px;color:#333;text-decoration:underline">index.html:130</div>
  <svg class="a" style="left:10.50px;top:531.50px" width="7" height="8"><path d="M1.2 0.8 L5 4 L1.2 7.2" stroke="#3c6fd0" stroke-width="1.5" fill="none"/></svg>
</div>
<div class="a" style="left:83px;top:51px;width:1195px;height:1px;background:#8c8c8c"></div>
<div class="a" style="left:0;top:454px;width:1278px;height:222px;pointer-events:none;background:linear-gradient(rgba(0,0,0,0) 0%,rgba(0,0,0,.022) 18%,rgba(0,0,0,.062) 38%,rgba(0,0,0,.158) 66%,rgba(0,0,0,.27) 100%)"></div>
</body></html>
